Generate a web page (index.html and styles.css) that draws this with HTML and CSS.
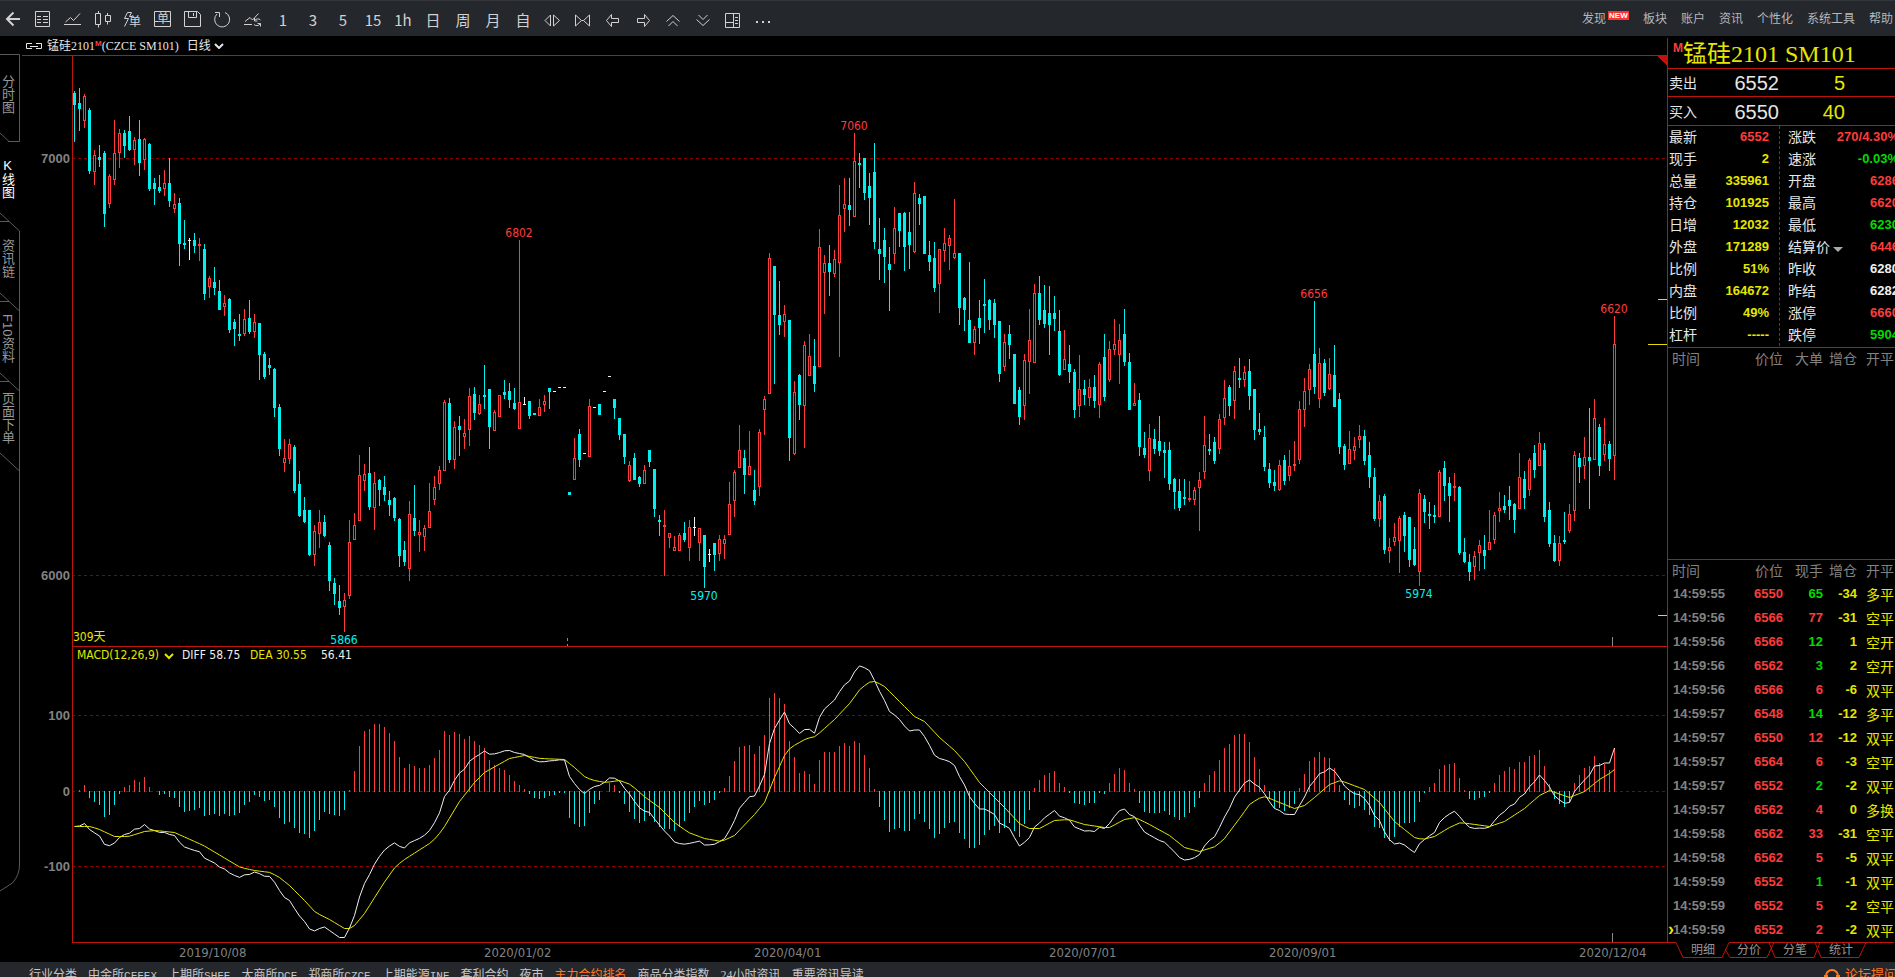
FILE: index.html
```html
<!DOCTYPE html>
<html lang="zh-CN">
	<head>
		<meta charset="utf-8" />
		<meta name="viewport" content="width=device-width, initial-scale=1" />

		<title>锰硅2101 日线</title>

		<link rel="stylesheet" href="styles.css">
	</head>
	<body>
		<header class="toolbar">
			<div class="tools">
				<button class="tool" type="button" aria-label="返回"><svg class="icon" viewBox="0 0 20 20"><path class="thick" d="M17 9H4M10.5 2.5L4 9l6.5 6.5" /></svg></button>
				<button class="tool" type="button" aria-label="报价"><svg class="icon" viewBox="0 0 20 20"><path d="M2.5 1.5h14v15h-14zM4 6.5h4M10 6.5h5M4 9.5h4M10 9.5h5M4 12.5h4M10 12.5h5" /></svg></button>
				<button class="tool" type="button" aria-label="分时"><svg class="icon" viewBox="0 0 20 20"><path d="M1 14.5h17M2.5 12l5-4.5 3 3 6.5-7" /></svg></button>
				<button class="tool" type="button" aria-label="K线"><svg class="icon" viewBox="0 0 20 20"><path d="M2.5 3.5h5v11h-5zM5.5 1v2.5M5.5 14.5v3M12.5 5.5h5v6h-5zM14.5 3v2.5M14.5 11.5v3" /></svg></button>
				<button class="tool" type="button" aria-label="闪电下单"><svg class="icon" viewBox="0 0 20 20"><path d="M8.5 2.5h-4l-3 6h4l-4 8M8.5 2.5l-2 4h3" /><text x="6" y="16" class="icon-text">单</text></svg></button>
				<button class="tool" type="button" aria-label="下单"><svg class="icon" viewBox="0 0 20 20"><path d="M1.5 1.5h16v15h-16zM1.5 11.5h4M13.5 11.5h4" /><text x="4" y="13" class="icon-text">单</text></svg></button>
				<button class="tool" type="button" aria-label="保存"><svg class="icon" viewBox="0 0 20 20"><path d="M1.5 1.5h13l3 3v12h-16zM5.5 1.5v6h8v-6M10.5 3v3" /></svg></button>
				<button class="tool" type="button" aria-label="刷新"><svg class="icon" viewBox="0 0 20 20"><path d="M12 2.5a7.5 7.5 0 1 1-8 1.5M2 2.5h4.5V7" /></svg></button>
				<button class="tool" type="button" aria-label="切换"><svg class="icon" viewBox="0 0 20 20"><path d="M1 14.5h8M2 11.5l5-4 2.5 2.5 6-6.5M17.5 10a4 4 0 0 0-6 .5M11.5 8v3h3M11 14.5a4 4 0 0 0 6-.5M17.5 16.5v-3h-3" /></svg></button>
				<button class="tool" type="button">1</button>
				<button class="tool" type="button">3</button>
				<button class="tool" type="button">5</button>
				<button class="tool" type="button">15</button>
				<button class="tool" type="button">1h</button>
				<button class="tool" type="button">日</button>
				<button class="tool" type="button">周</button>
				<button class="tool" type="button">月</button>
				<button class="tool" type="button">自</button>
				<button class="tool" type="button" aria-label="放宽"><svg class="icon" viewBox="0 0 20 20"><path d="M7.5 5v11L2 10.5zM10.5 5v11l6-5.5z" /></svg></button>
				<button class="tool" type="button" aria-label="收窄"><svg class="icon" viewBox="0 0 20 20"><path d="M2.5 5v11l6-5.5zM16.5 5v11l-6-5.5zM8.5 10.5h2" /></svg></button>
				<button class="tool" type="button" aria-label="左移"><svg class="icon" viewBox="0 0 20 20"><path d="M3.5 10.5l5-6v4h7v4h-7v4z" /></svg></button>
				<button class="tool" type="button" aria-label="右移"><svg class="icon" viewBox="0 0 20 20"><path d="M16.5 10.5l-5-6v4h-7v4h7v4z" /></svg></button>
				<button class="tool" type="button" aria-label="上一个"><svg class="icon" viewBox="0 0 20 20"><path d="M3.5 11.5L10 5.5l6.5 6M5.5 16L10 11.5l4.5 4.5" /></svg></button>
				<button class="tool" type="button" aria-label="下一个"><svg class="icon" viewBox="0 0 20 20"><path d="M3.5 9.5l6.5 6 6.5-6M5.5 5L10 9.5 14.5 5" /></svg></button>
				<button class="tool" type="button" aria-label="布局"><svg class="icon" viewBox="0 0 20 20"><path d="M2.5 3.5h14v14h-14zM10.5 3.5v14M2.5 12.5h8M12 7.5h3M12 10.5h3M12 13.5h3" /></svg></button>
				<button class="tool" type="button" aria-label="更多"><svg class="icon" viewBox="0 0 20 20"><path class="thick" d="M3 12h2M9 12h2M15 12h2" /></svg></button>
			</div>
			<nav class="menu">
				<a href="#" class="menu-new">发现<span class="badge">NEW</span></a>
				<a href="#">板块</a>
				<a href="#">账户</a>
				<a href="#">资讯</a>
				<a href="#">个性化</a>
				<a href="#">系统工具</a>
				<a href="#">帮助</a>
			</nav>
		</header>

		<main>
			<section class="chart-area">
				<div class="chart-title">
					<svg class="link-icon" viewBox="0 0 16 8"><path d="M6 1.5H.5v5H6M10 1.5h5.5v5H10M4 4.5h8" /></svg>
					<h1>锰硅2101<sup>M</sup>(CZCE SM101)</h1>
					<button class="period" type="button">日线<svg class="chevron" viewBox="0 0 10 6"><path d="M1 1l4 4 4-4" /></svg></button>
				</div>
				<div class="chart-body">
					<nav class="side">
						<svg class="side-lines" viewBox="0 0 20 840">
							<path d="M0 .5h19.5v87H8M0 79l9 8.5M0 159l19.5 18v634q0 10-7 18L0 837M0 167.5h9M0 239l19.5 18M0 247.5h9M0 319l19.5 18M0 327.5h9M0 399l19.5 18" />
						</svg>
						<button type="button">分时图</button>
						<button type="button" class="active">K线图</button>
						<button type="button">资讯链</button>
						<button type="button" class="turned">F10资料</button>
						<button type="button">页面下单</button>
					</nav>
					<svg id="chart" class="chart"></svg>
				</div>
			</section>

			<aside class="quote">
				<h2><sup>M</sup>锰硅2101 SM101</h2>
				<div class="offer"><span>卖出</span><strong>6552</strong><em>5</em></div>
				<div class="offer buy"><span>买入</span><strong>6550</strong><em>40</em></div>
				<div class="stats">
					<dl>
						<div><dt>最新</dt><dd class="up">6552</dd></div>
						<div><dt>现手</dt><dd>2</dd></div>
						<div><dt>总量</dt><dd>335961</dd></div>
						<div><dt>持仓</dt><dd>101925</dd></div>
						<div><dt>日增</dt><dd>12032</dd></div>
						<div><dt>外盘</dt><dd>171289</dd></div>
						<div><dt>比例</dt><dd>51%</dd></div>
						<div><dt>内盘</dt><dd>164672</dd></div>
						<div><dt>比例</dt><dd>49%</dd></div>
						<div><dt>杠杆</dt><dd>-----</dd></div>
					</dl>
					<dl class="right">
						<div><dt>涨跌</dt><dd class="up">270/4.30%</dd></div>
						<div><dt>速涨</dt><dd class="down">-0.03%</dd></div>
						<div><dt>开盘</dt><dd class="up">6286</dd></div>
						<div><dt>最高</dt><dd class="up">6620</dd></div>
						<div><dt>最低</dt><dd class="down">6230</dd></div>
						<div><dt class="drop">结算价</dt><dd class="up">6446</dd></div>
						<div><dt>昨收</dt><dd class="flat">6280</dd></div>
						<div><dt>昨结</dt><dd class="flat">6282</dd></div>
						<div><dt>涨停</dt><dd class="up">6660</dd></div>
						<div><dt>跌停</dt><dd class="down">5904</dd></div>
					</dl>
				</div>
				<div class="big-orders">
					<table>
						<thead><tr><th>时间</th><th>价位</th><th>大单</th><th>增仓</th><th>开平</th></tr></thead>
					</table>
				</div>
				<div class="ticks">
					<table>
						<thead><tr><th>时间</th><th>价位</th><th>现手</th><th>增仓</th><th>开平</th></tr></thead>
						<tbody>
							<tr><td>14:59:55</td><td>6550</td><td class="down">65</td><td>-34</td><td>多平</td></tr>
							<tr><td>14:59:56</td><td>6566</td><td class="up">77</td><td>-31</td><td>空平</td></tr>
							<tr><td>14:59:56</td><td>6566</td><td class="down">12</td><td>1</td><td>空开</td></tr>
							<tr><td>14:59:56</td><td>6562</td><td class="down">3</td><td>2</td><td>空开</td></tr>
							<tr><td>14:59:56</td><td>6566</td><td class="up">6</td><td>-6</td><td>双平</td></tr>
							<tr><td>14:59:57</td><td>6548</td><td class="down">14</td><td>-12</td><td>多平</td></tr>
							<tr><td>14:59:57</td><td>6550</td><td class="up">12</td><td>-12</td><td>双平</td></tr>
							<tr><td>14:59:57</td><td>6564</td><td class="up">6</td><td>-3</td><td>空平</td></tr>
							<tr><td>14:59:57</td><td>6552</td><td class="down">2</td><td>-2</td><td>双平</td></tr>
							<tr><td>14:59:57</td><td>6562</td><td class="up">4</td><td>0</td><td>多换</td></tr>
							<tr><td>14:59:58</td><td>6562</td><td class="up">33</td><td>-31</td><td>空平</td></tr>
							<tr><td>14:59:58</td><td>6562</td><td class="up">5</td><td>-5</td><td>双平</td></tr>
							<tr><td>14:59:59</td><td>6552</td><td class="down">1</td><td>-1</td><td>双平</td></tr>
							<tr><td>14:59:59</td><td>6552</td><td class="up">5</td><td>-2</td><td>空平</td></tr>
							<tr class="last"><td>14:59:59</td><td>6552</td><td class="up">2</td><td>-2</td><td>双平</td></tr>
						</tbody>
					</table>
				</div>
				<div class="tabs">
					<svg class="tab-lines" viewBox="0 0 227 20"><path d="M0 .5h9l7 15h39l7-15h165M58 7l5 8.5h37l7-15M102 .5l6 15h39l6-15M148 .5l6 15h38l7-15" /></svg>
					<button type="button">明细</button>
					<button type="button">分价</button>
					<button type="button">分笔</button>
					<button type="button">统计</button>
				</div>
			</aside>
		</main>

		<footer>
			<nav class="markets">
				<a href="#">行业分类</a>
				<a href="#">中金所<span class="code">CFFEX</span></a>
				<a href="#">上期所<span class="code">SHFE</span></a>
				<a href="#">大商所<span class="code">DCE</span></a>
				<a href="#">郑商所<span class="code">CZCE</span></a>
				<a href="#">上期能源<span class="code">INE</span></a>
				<a href="#">套利合约</a>
				<a href="#">夜市</a>
				<a href="#" class="current">主力合约排名</a>
				<a href="#">商品分类指数</a>
				<a href="#">24小时资讯</a>
				<a href="#">重要资讯导读</a>
			</nav>
			<a href="#" class="forum"><svg class="headset" viewBox="0 0 18 18"><path d="M3 10V8a6 6 0 0 1 12 0v2M2 8h2v6H2zM14 8h2v6h-2z" /></svg>论坛提问</a>
		</footer>

		<script src="chart.js"></script>
	</body>
</html>
```

FILE: styles.css
```css
* {
	padding: 0;
	margin: 0;
	box-sizing: border-box;
}

html, body {
	height: 100%;
}

body {
	display: flex;
	flex-direction: column;
	overflow: hidden;
	background: #000;
	color: #e6e6e6;
	font-size: 12px;
	line-height: 16px;
	font-family: "Liberation Sans", "Noto Sans CJK SC", sans-serif;
}

a {
	color: inherit;
	text-decoration: none;
}

button {
	border: none;
	background: none;
	color: inherit;
	font: inherit;
	white-space: nowrap;
}

svg {
	display: block;
}

path {
	fill: none;
	stroke: currentColor;
}

.up {
	color: #ff3b3b;
}

.down {
	color: #00dc00;
}

.flat {
	color: #f0f0f0;
}

/* Toolbar */
.toolbar {
	flex: none;
	display: flex;
	justify-content: space-between;
	height: 36px;
	background: #24272c;
	border-top: 1px solid #33373c;
	color: #d2d2d2;
	overflow: hidden;
}

.tools {
	display: flex;
	margin-left: -2px;
}

.tool {
	display: flex;
	justify-content: center;
	align-items: center;
	width: 30px;
	height: 38px;
	font-family: "Noto Sans CJK SC", sans-serif;
	font-size: 15px;
}

.icon {
	width: 20px;
	height: 20px;
}

.icon .thick {
	stroke-width: 2;
}

.icon-text {
	font-size: 12px;
	fill: currentColor;
}

.menu {
	display: flex;
	gap: 14px;
	align-items: center;
	padding-right: 2px;
	color: #b4b8bc;
}

.menu-new {
	display: flex;
	gap: 2px;
}

.badge {
	width: 21px;
	height: 9px;
	background: #ff3232;
	color: #fff;
	font-size: 8px;
	line-height: 9px;
	font-weight: bold;
	text-align: center;
}

/* Chart */
main {
	flex: 1;
	display: flex;
	min-height: 0;
}

.chart-area {
	flex: 1;
	min-width: 0;
}

.chart-title {
	display: flex;
	align-items: center;
	height: 19px;
	padding-left: 26px;
	font-family: "Liberation Serif", "Noto Sans CJK SC", serif;
}

.chart-title h1 {
	margin: 0 8px 0 5px;
	font-size: 12px;
	font-weight: normal;
}

sup {
	color: #ff3b3b;
	font-family: "Liberation Sans", sans-serif;
	font-weight: bold;
	vertical-align: top;
}

.chart-title sup {
	font-size: 8px;
	line-height: 12px;
}

.link-icon {
	width: 16px;
	height: 8px;
}

.period {
	display: flex;
	align-items: center;
	gap: 3px;
}

.chevron {
	width: 10px;
	height: 6px;
}

.chevron path {
	stroke-width: 2;
}

.chart-body {
	display: flex;
	gap: 2px;
}

.side {
	position: relative;
	display: flex;
	flex-direction: column;
	width: 20px;
	color: #969696;
}

.side button {
	height: 80px;
	padding: 0 6px 8px 0;
	writing-mode: vertical-rl;
	text-orientation: upright;
	font-size: 13px;
	line-height: 14px;
	text-align: center;
}

.side button:first-of-type {
	height: 87px;
}

.side .active {
	color: #fff;
}

.side .turned {
	text-orientation: mixed;
}

.side-lines {
	position: absolute;
	top: -1px;
	left: 0;
	width: 20px;
	height: 840px;
	color: #5a5a5a;
}

.chart {
	flex: 1;
	min-width: 0;
	height: 907px;
}

.frame {
	stroke: #be140a;
}

.frame-fill {
	fill: #be140a;
}

.grid {
	stroke: #8c0000;
	stroke-dasharray: 3 3;
}

.mark {
	stroke: #e6dc00;
}

.day-mark {
	stroke: #8c8c8c;
}

.candle-c, .bar-down {
	fill: #00f0f0;
}

.candle-r, .bar-up {
	fill: #ff3b3b;
}

.candle-w {
	fill: #f0f0f0;
}

.hollow {
	fill: #000;
	stroke: #ff3b3b;
}

.line-diff {
	stroke: #f0f0f0;
}

.line-dea, .arrow {
	stroke: #e6e600;
}

.arrow {
	stroke-width: 2;
}

.chart text {
	font-family: "DejaVu Sans Condensed", "Open Sans", "Noto Sans CJK SC", sans-serif;
	font-size: 12px;
}

.chart .axis {
	fill: #828282;
	font-family: "Liberation Sans", sans-serif;
	font-size: 13px;
	font-weight: bold;
	text-anchor: end;
}

.chart .date {
	fill: #828282;
	font-size: 13px;
}

.label-high, .label-low {
	text-anchor: middle;
}

.label-high {
	fill: #ff3b3b;
}

.label-low {
	fill: #00f0f0;
}

.text-yellow {
	fill: #e6e600;
}

.text-white {
	fill: #f0f0f0;
}

/* Quote panel */
.quote {
	flex: none;
	display: flex;
	flex-direction: column;
	width: 228px;
	margin-top: 2px;
	overflow: hidden;
}

.quote > * {
	flex: none;
	border-left: 1px solid #be140a;
}

.quote h2 {
	height: 31px;
	padding-left: 5px;
	border-bottom: 1px solid #be140a;
	color: #e6e600;
	font-family: "Liberation Serif", "Noto Sans CJK SC", serif;
	font-size: 24px;
	font-weight: normal;
	line-height: 32px;
	white-space: nowrap;
}

.quote sup {
	font-size: 12px;
	line-height: 20px;
}

.offer {
	display: flex;
	align-items: center;
	height: 28px;
	padding-left: 1px;
	border-bottom: 1px solid #be140a;
	font-size: 14px;
}

.buy {
	height: 29px;
	padding-top: 2px;
}

.offer strong, .offer em {
	font-size: 20px;
	font-weight: normal;
	font-style: normal;
	text-align: right;
}

.offer strong {
	width: 82px;
}

.offer em {
	width: 66px;
	color: #e6e600;
}

.stats {
	display: flex;
	padding-bottom: 1px;
	border-bottom: 1px solid #be140a;
}

.stats dl {
	flex: none;
	width: 112px;
	padding: 0 10px 0 1px;
	border-right: 1px dashed #be140a;
}

.stats .right {
	width: 119px;
	padding: 0 0 0 8px;
	border: none;
}

.stats dl > div {
	display: flex;
	justify-content: space-between;
	height: 22px;
	font-size: 14px;
	line-height: 22px;
}

.stats dd {
	color: #e6e600;
	font-size: 13px;
	font-weight: bold;
}

.stats .up {
	color: #ff3b3b;
}

.stats .down {
	color: #00dc00;
}

.stats .flat {
	color: #f0f0f0;
}

.drop {
	display: flex;
	align-items: center;
	gap: 3px;
}

.drop::after {
	content: "";
	margin-top: 4px;
	border: 5px solid transparent;
	border-top-color: #aaa;
	border-bottom: none;
}

.quote .big-orders {
	flex: 1;
	min-height: 0;
	border-bottom: 1px solid #be140a;
}

table {
	width: 227px;
	table-layout: fixed;
	border-collapse: collapse;
	font-size: 14px;
	line-height: 24px;
	white-space: nowrap;
}

th {
	width: 40px;
	height: 22px;
	color: #828282;
	font-weight: normal;
	line-height: 22px;
	text-align: right;
}

th:first-child {
	width: 75px;
	padding-left: 4px;
	text-align: left;
}

th:nth-child(4) {
	width: 34px;
}

th:last-child {
	width: 38px;
	padding-left: 9px;
	text-align: left;
}

td {
	height: 24px;
	color: #ff3b3b;
	font-size: 13px;
	font-weight: bold;
	text-align: right;
}

td.down {
	color: #00dc00;
}

td:first-child {
	position: relative;
	padding-left: 5px;
	color: #828282;
	text-align: left;
}

td:nth-child(4), td:last-child {
	color: #e6e600;
}

td:last-child {
	padding-left: 9px;
	font-family: "Noto Sans CJK SC", sans-serif;
	font-size: 14px;
	font-weight: normal;
	text-align: left;
}

.last td:first-child::before {
	content: "›";
	position: absolute;
	top: 0;
	left: 0;
	color: #e6e600;
	font-size: 18px;
	line-height: 22px;
}

.quote .tabs {
	position: relative;
	display: flex;
	height: 20px;
	padding-left: 13px;
	border: none;
	color: #969696;
}

.tabs button {
	position: relative;
	width: 46px;
	height: 16px;
}

.tab-lines {
	position: absolute;
	top: 0;
	left: 0;
	width: 227px;
	height: 20px;
	color: #be140a;
}

/* Bottom bar */
footer {
	flex: none;
	display: flex;
	justify-content: space-between;
	height: 15px;
	padding: 4px 0 0 29px;
	overflow: hidden;
	background: #24272c;
	color: #c8c8c8;
	line-height: 18px;
	white-space: nowrap;
}

.markets {
	display: flex;
	gap: 11px;
	font-family: "Liberation Serif", "Noto Sans CJK SC", serif;
}

.code {
	font-family: "Liberation Mono", monospace;
	font-size: 11px;
}

.current, .forum {
	color: #ff781e;
}

.forum {
	display: flex;
	gap: 4px;
	width: 72px;
	font-size: 13px;
}

.headset {
	flex: none;
	width: 18px;
	height: 18px;
	margin-top: 2px;
}

.headset path {
	stroke-width: 2;
}
```

FILE: chart.js
```js
// Constants
const svgNs = 'http://www.w3.org/2000/svg';
const chart = document.getElementById('chart');

const top0 = 55;// screen row of the upper frame line
const firstBar = 52;
const step = 5;
const axisX = 50;
const zeroRow = 791;

// One candle per day: colour, high, body top, body bottom, low
const candles = `
c 91 93 105 142,c 88 103 109 131,r 94 96 121 128,c 108 110 171 174,r 150 155 172 185,c 145 157 160 167,c 151 153 214 227,r 174 176 204 208,
r 120 153 180 185,r 129 133 153 168,c 130 133 146 158,c 116 131 150 151,r 137 140 150 165,c 120 139 163 176,r 138 139 160 170,c 143 144 189 191,
c 178 183 189 205,c 175 187 191 193,r 170 183 189 196,c 158 183 201 207,r 193 204 209 213,c 198 203 244 266,c 220 243 245 249,w 238 240 241 260,
c 233 240 246 253,r 238 244 246 261,c 244 249 294 300,r 276 278 287 298,c 267 282 288 295,c 280 291 310 310,r 295 303 307 316,c 298 299 330 333,
c 319 322 329 346,c 314 334 336 341,r 309 319 334 336,c 300 318 332 334,r 314 322 332 338,c 323 323 355 380,c 352 354 377 379,c 358 365 368 375,
c 368 369 408 417,c 404 407 449 456,r 439 458 463 472,r 439 444 459 464,c 445 447 491 493,c 471 484 516 517,c 497 510 522 523,c 510 510 555 556,
r 525 531 555 566,r 510 522 534 548,c 515 522 536 537,c 542 545 581 591,c 578 583 594 605,c 585 601 608 615,r 593 600 607 632,r 520 542 596 599,
r 513 525 540 540,r 455 475 521 521,r 464 474 481 491,c 447 473 507 510,r 472 483 508 530,c 479 480 490 506,c 476 487 495 501,c 491 500 505 516,
c 497 498 518 521,c 518 519 556 567,c 541 550 562 566,r 501 514 569 581,c 485 518 531 536,r 520 532 535 552,r 525 528 537 551,r 483 511 528 528,
r 476 487 500 505,r 466 470 484 490,r 400 402 471 471,c 398 403 460 463,r 421 427 460 469,c 416 426 430 456,r 419 433 437 449,r 388 396 430 446,
c 387 394 413 420,r 395 404 414 415,c 365 395 397 409,c 389 389 427 449,r 410 412 431 431,r 395 395 417 417,c 380 392 395 399,c 383 391 400 408,
c 388 403 409 410,r 240 402 429 429,w 397 404 405 405,c 401 401 416 419,c 413 413 415 415,r 399 407 416 416,r 395 401 405 412,c 388 388 392 409,
w 391 391 392 392,w 387 387 388 388,w 387 387 388 388,c 492 492 495 495,r 438 458 480 480,c 429 434 460 467,w 453 453 454 454,r 399 406 457 457,
w 407 407 408 408,c 404 404 415 415,w 391 391 392 392,w 376 376 377 377,c 399 399 408 419,c 418 418 435 440,c 434 434 457 464,r 461 465 481 482,
c 453 458 480 480,c 476 477 484 487,r 465 470 484 484,c 450 450 462 467,c 469 469 509 517,c 515 520 522 536,r 510 525 527 576,r 533 533 538 548,
r 536 547 551 551,r 533 535 551 551,c 522 533 540 542,r 520 527 548 561,w 517 527 528 536,r 528 528 543 561,c 535 535 567 588,w 549 554 555 562,
c 543 543 555 571,r 535 539 554 561,r 535 539 544 559,r 482 504 535 535,r 470 472 501 517,r 425 450 468 468,c 450 458 475 494,r 431 466 475 475,
c 470 490 501 505,r 429 432 487 496,r 396 399 410 435,r 253 258 394 394,c 266 266 315 384,c 281 315 325 335,r 305 314 322 337,c 320 320 438 461,
r 381 392 454 455,c 374 375 405 420,r 341 345 406 448,r 334 356 376 376,c 339 366 384 392,r 229 247 367 367,r 255 263 273 314,c 245 263 272 296,
r 250 259 274 277,r 185 215 263 357,r 178 204 209 232,c 178 205 210 226,r 133 161 217 217,c 153 163 165 188,c 158 158 193 200,c 173 186 198 225,
c 143 172 242 249,c 218 249 254 280,c 228 240 257 283,c 247 264 270 311,r 207 228 254 264,c 213 213 231 247,c 212 213 247 271,c 212 232 245 269,
r 182 193 252 253,c 194 198 204 225,c 196 196 254 254,c 241 255 262 271,c 242 258 288 292,r 249 249 284 313,r 228 243 251 262,r 235 238 246 270,
r 199 253 258 259,c 253 253 308 325,c 297 298 310 331,c 262 320 343 343,r 326 329 343 355,c 300 318 328 344,c 279 304 306 333,c 299 300 320 330,
c 299 303 325 338,c 321 321 374 382,r 334 342 367 371,c 325 334 345 359,c 354 354 404 404,c 387 390 417 425,r 354 360 406 420,r 309 340 362 394,
r 284 293 363 363,c 276 293 320 325,c 285 310 324 328,c 286 313 325 355,c 296 313 319 331,c 310 331 375 376,r 330 359 370 370,c 345 364 372 383,
c 369 372 410 418,r 355 389 406 417,c 380 389 395 405,r 379 387 398 406,c 375 387 401 408,r 362 364 405 418,c 334 357 397 401,r 341 349 380 382,
r 319 344 350 355,r 324 340 355 384,c 309 334 362 366,c 353 362 410 410,r 383 403 406 406,c 393 400 447 456,c 432 448 455 458,r 424 438 471 481,
c 429 439 449 454,c 416 441 451 456,c 442 450 453 478,c 442 450 484 490,c 478 479 492 509,c 479 491 508 511,c 479 497 499 505,r 481 498 500 502,
r 487 490 500 505,r 472 480 488 531,r 416 445 472 479,c 434 449 451 455,c 437 442 461 464,r 414 419 449 454,r 380 398 418 425,c 385 387 406 416,
r 366 371 401 419,c 358 378 380 388,r 366 372 380 387,c 359 371 396 410,c 389 389 430 440,c 413 429 432 435,c 426 437 467 471,c 463 469 483 488,
c 470 482 486 491,r 460 465 490 491,c 455 460 481 485,r 450 466 476 481,r 441 464 466 471,r 401 409 460 464,r 378 391 410 427,r 364 369 390 405,
c 301 354 387 394,r 348 363 399 408,c 359 363 393 396,r 358 374 389 390,c 345 375 407 407,c 393 399 447 454,c 444 446 465 470,r 431 449 464 464,
r 437 446 451 460,r 425 436 440 448,c 430 436 461 465,c 442 455 477 488,c 468 477 519 521,r 495 501 519 527,c 494 496 550 554,r 538 547 551 563,
r 523 537 542 546,r 516 518 541 573,c 512 515 536 552,c 517 517 560 567,c 527 549 565 566,r 489 493 572 586,c 495 499 512 523,c 502 514 516 529,
c 505 515 517 523,r 470 472 517 517,c 461 468 486 501,c 477 483 496 522,r 473 486 488 501,c 486 487 553 555,c 538 552 562 563,c 554 562 572 581,
r 551 556 567 580,r 540 545 553 571,c 535 550 556 569,r 510 542 550 550,r 512 515 540 544,r 492 508 511 522,c 495 506 510 513,c 486 500 506 520,
c 503 504 520 533,r 453 477 509 509,c 471 479 498 509,r 458 460 490 496,c 445 453 470 478,r 432 443 466 466,c 443 450 517 522,c 502 510 544 547,
c 535 543 561 562,r 536 543 561 566,c 512 540 542 544,r 504 514 531 533,r 451 455 511 521,c 453 458 467 483,r 437 457 466 479,c 408 457 461 509,
r 399 418 460 460,c 424 427 466 476,r 418 444 455 461,c 441 444 459 471,r 316 344 456 480`;

// MACD bars, rows above (+) or below (-) the zero line
const bars = [
	0, 1, 6, -6, -10, -13, -25, -23, -13, -2, 4, 6, 11, 9, 14, 4, 0, -3, -2, -5, -6, -15, -20, -19, -18, -16, -24, -23, -22, -24,
	-22, -24, -23, -21, -13, -10, -3, -5, -9, -8, -15, -26, -32, -30, -36, -41, -42, -46, -39, -28, -20, -22, -23, -24, -18, 1, 20, 45, 60, 62,
	67, 67, 64, 58, 50, 34, 23, 27, 25, 23, 23, 26, 33, 41, 60, 56, 59, 57, 52, 55, 50, 46, 43, 31, 26, 23, 21, 16, 10, 6,
	2, -2, -6, -7, -6, -4, -3, -1, -1, -26, -32, -35, -34, -21, -12, -8, 0, 8, 6, -1, -12, -20, -27, -31, -29, -24, -30, -35, -37, -37,
	-39, -35, -29, -21, -15, -9, -13, -11, -8, -1, 3, 15, 30, 44, 45, 46, 37, 45, 56, 93, 98, 93, 87, 50, 34, 18, 20, 17, 7, 31,
	39, 39, 39, 45, 48, 45, 50, 48, 36, 23, 2, -15, -28, -40, -37, -36, -39, -39, -27, -22, -30, -37, -46, -42, -36, -31, -30, -41, -47, -56,
	-56, -53, -43, -38, -34, -41, -36, -31, -39, -45, -32, -18, 3, 11, 16, 18, 20, 8, 4, -1, -11, -12, -13, -11, -11, -1, -2, 8, 17, 23,
	21, 8, 2, -11, -20, -21, -21, -21, -19, -23, -25, -28, -25, -21, -15, -6, 8, 16, 20, 31, 43, 47, 56, 57, 57, 49, 34, 22, 6, -7,
	-16, -16, -19, -16, -12, 3, 17, 30, 34, 39, 34, 33, 23, 6, -8, -13, -16, -14, -18, -23, -35, -36, -46, -49, -45, -35, -31, -31, -30, -10,
	-1, 4, 8, 22, 26, 27, 28, 13, 1, -7, -8, -6, -5, -1, 8, 16, 20, 24, 22, 29, 29, 35, 36, 41, 25, 7, -7, -12, -15, -10,
	8, 16, 23, 25, 35, 28, 27, 21, 43
];

// DEA line, turning points as screen column and row
const dea = [
	[74, 826], [90, 826], [99, 829], [114, 836], [128, 836], [144, 831], [155, 830], [174, 832], [203, 845], [240, 867],
	[254, 870], [270, 872], [279, 877], [289, 885], [304, 900], [315, 912], [329, 919], [344, 928], [349, 928], [354, 925],
	[364, 913], [383, 883], [395, 866], [404, 859], [429, 843], [436, 837], [444, 826], [459, 801], [474, 782], [484, 772],
	[509, 758], [524, 755], [540, 758], [564, 759], [574, 767], [585, 777], [594, 780], [605, 782], [619, 780], [630, 784],
	[645, 797], [659, 807], [674, 822], [688, 832], [704, 838], [721, 841], [734, 835], [754, 814], [764, 802], [774, 777],
	[784, 755], [790, 747], [806, 738], [815, 736], [834, 719], [850, 702], [860, 688], [870, 681], [875, 681], [884, 686],
	[899, 701], [914, 716], [924, 721], [939, 737], [954, 750], [964, 761], [979, 782], [989, 792], [1004, 807], [1019, 823],
	[1028, 828], [1039, 828], [1054, 820], [1068, 819], [1084, 824], [1104, 827], [1109, 827], [1124, 819], [1135, 817], [1149, 824],
	[1169, 835], [1184, 847], [1199, 851], [1215, 846], [1224, 838], [1239, 818], [1249, 804], [1258, 798], [1265, 796], [1274, 800],
	[1294, 808], [1304, 805], [1314, 797], [1329, 784], [1340, 780], [1364, 789], [1379, 802], [1394, 821], [1414, 837], [1422, 839],
	[1434, 836], [1449, 827], [1460, 822], [1489, 826], [1504, 821], [1524, 808], [1539, 795], [1549, 790], [1569, 797], [1584, 791],
	[1599, 779], [1609, 773], [1614, 769]
];

// Functions
const add = (name, attributes, text, parent = chart) => {
	const node = document.createElementNS(svgNs, name);
	Object.keys(attributes).forEach(key => node.setAttribute(key, attributes[key]));
	if (text) node.textContent = text;
	parent.appendChild(node);
	return node;
};

const row = y => y - top0;
const column = x => x - 22;

const hline = (y, className, from = 0) => add('line', { x1: from, x2: '100%', y1: row(y) + 0.5, y2: row(y) + 0.5, class: className });
const vline = (x, y1, y2, className) => add('line', { x1: column(x) + 0.5, x2: column(x) + 0.5, y1: row(y1), y2: row(y2), class: className });
const label = (x, y, text, className) => add('text', { x: column(x), y: row(y), class: className }, text);

const deaAt = (x) => {
	const next = Math.max(1, dea.findIndex(point => point[0] >= x));
	const [x1, y1] = dea[next - 1];
	const [x2, y2] = dea[next];
	return y1 + (y2 - y1) * (x - x1) / (x2 - x1);
};

const drawFrame = () => {
	[158, 575, 715, 791, 866].forEach(y => hline(y, 'grid', axisX));
	hline(55, 'frame');
	hline(646, 'frame', axisX);
	hline(942, 'frame', axisX);
	vline(72, 55, 943, 'frame');

	label(70, 163, '7000', 'axis');
	label(70, 580, '6000', 'axis');
	label(70, 720, '100', 'axis');
	label(70, 796, '0', 'axis');
	label(70, 871, '-100', 'axis');

	// Marks that hang on the right edge
	const edge = add('svg', { x: '100%', y: 0, overflow: 'visible' });
	add('path', { d: 'M-10 0H0V10Z', class: 'frame-fill frame' }, '', edge);
	add('path', { d: 'M-9 244.5H0M-19 289.5H0M-9 560.5H0', class: 'mark' }, '', edge);
};

const drawCandles = () => {
	candles.trim().split(/,\s*/).forEach((item, i) => {
		const [color, ...values] = item.split(' ');
		const [high, bodyTop, bodyBottom, low] = values.map(value => row(+value));
		const x = firstBar + i * step;
		const className = 'candle-' + color;

		add('rect', { x, y: high, width: 1, height: low - high, class: className });
		if (color === 'r' && bodyBottom - bodyTop > 2) {
			add('rect', { x: x - 0.5, y: bodyTop + 0.5, width: 2, height: bodyBottom - bodyTop - 1, class: 'hollow' });
		} else {
			add('rect', { x: x - 1, y: bodyTop, width: 3, height: bodyBottom - bodyTop, class: className });
		}
	});
};

const drawMacd = () => {
	const diffPoints = [];
	const deaPoints = [];

	bars.forEach((value, i) => {
		const x = firstBar + i * step;
		const y = deaAt(x - column(0));
		if (value) {
			add('rect', {
				x,
				y: row(value > 0 ? zeroRow - value : zeroRow),
				width: 1,
				height: Math.abs(value) + 1,
				class: value > 0 ? 'bar-up' : 'bar-down'
			});
		}
		deaPoints.push(`${x + 0.5} ${row(y) + 0.5}`);
		diffPoints.push(`${x + 0.5} ${row(y - value / 2) + 0.5}`);
	});

	add('path', { d: 'M' + diffPoints.join('L'), class: 'line-diff' });
	add('path', { d: 'M' + deaPoints.join('L'), class: 'line-dea' });
};

const drawLabels = () => {
	label(519, 237, '6802', 'label-high');
	label(854, 130, '7060', 'label-high');
	label(1314, 298, '6656', 'label-high');
	label(1614, 313, '6620', 'label-high');
	label(344, 644, '5866', 'label-low');
	label(704, 600, '5970', 'label-low');
	label(1419, 598, '5974', 'label-low');

	label(73, 641, '309天', 'text-yellow');
	label(77, 659, 'MACD(12,26,9)', 'text-yellow');
	add('path', { d: 'M143 599l4 4 4-4', class: 'arrow' });
	label(182, 659, 'DIFF 58.75', 'text-white');
	label(250, 659, 'DEA 30.55', 'text-yellow');
	label(321, 659, '56.41', 'text-white');

	label(179, 957, '2019/10/08', 'date');
	label(484, 957, '2020/01/02', 'date');
	label(754, 957, '2020/04/01', 'date');
	label(1049, 957, '2020/07/01', 'date');
	label(1269, 957, '2020/09/01', 'date');
	label(1579, 957, '2020/12/04', 'date');

	vline(567, 638, 641, 'day-mark');
	vline(567, 644, 646, 'day-mark');
	vline(1612, 637, 646, 'day-mark');
	vline(1612, 933, 942, 'day-mark');
};

drawFrame();
drawCandles();
drawMacd();
drawLabels();
```
